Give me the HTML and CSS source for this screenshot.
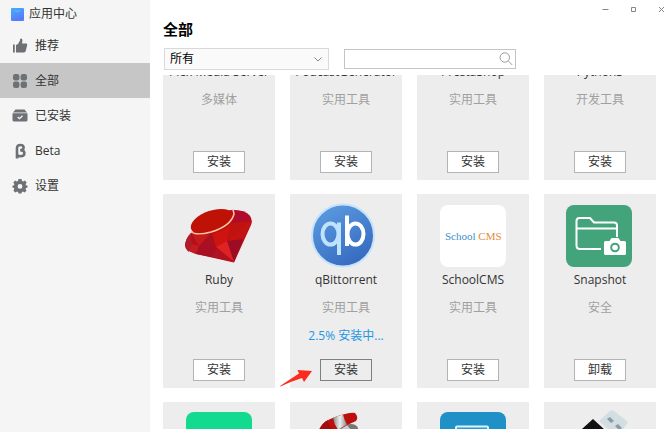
FILE: index.html
```html
<!DOCTYPE html>
<html lang="zh-CN">
<head>
<meta charset="utf-8">
<meta name="viewport" content="width=device-width, initial-scale=1">
<title>应用中心</title>
<link rel="stylesheet" href="styles.css">
</head>
<body>
<div class="app">
  <aside class="sidebar">
    <div class="brand">
      <svg class="brand-icon" viewBox="0 0 13 13" aria-hidden="true">
        <defs><linearGradient id="bag" x1="0" y1="0" x2="0.4" y2="1"><stop offset="0" stop-color="#41b0f8"/><stop offset="1" stop-color="#5a78fa"/></linearGradient></defs>
        <rect width="13" height="13" rx="1" fill="url(#bag)"/>
        <path d="M4 2.500q2.500 2.500 5 0" fill="none" stroke="#7fc6fb" stroke-width=".7"/>
      </svg>
      <span>应用中心</span>
    </div>
    <nav class="nav">
      <a class="nav-item" href="#recommend">
        <svg class="nav-icon" viewBox="0 0 16 16" aria-hidden="true"><path d="M1 6.500h1.800v8H1zM4 7l2-1 2.100-3.800V1.200c0-.5.4-.7.8-.6 1.200.2 1.700 1.200 1.500 2.300L10 5.500h4c.9 0 1.400.6 1.200 1.400l-1.500 6.200c-.2.900-.8 1.400-1.700 1.400H4z"/></svg>
        <span>推荐</span>
      </a>
      <a class="nav-item active" href="#all" aria-current="page">
        <svg class="nav-icon" viewBox="0 0 16 16" aria-hidden="true"><rect x="1" y="1" width="6.400" height="6.400" rx="2.200"/><rect x="8.600" y="1" width="6.400" height="6.400" rx="2.200"/><rect x="1" y="8.600" width="6.400" height="6.400" rx="2.200"/><rect x="8.600" y="8.600" width="6.400" height="6.400" rx="2.200"/></svg>
        <span>全部</span>
      </a>
      <a class="nav-item" href="#installed">
        <svg class="nav-icon" viewBox="0 0 16 16" aria-hidden="true"><path d="M3.500 1.500h9l2.500 3H1z"/><path d="M.5 5.300h15V12q0 1.500-1.500 1.500H2Q.5 13.500.5 12z"/><path d="M5.700 9l1.800 1.700 3-3" fill="none" stroke="#f5f5f5" stroke-width="1.300"/></svg>
        <span>已安装</span>
      </a>
      <a class="nav-item" href="#beta">
        <svg class="nav-icon" viewBox="0 0 16 16" aria-hidden="true"><path d="M5 15.500V5q0-3 3.400-3 3.200 0 3.200 2.700 0 2.300-3.400 2.500 4.200 0 4.200 3.100 0 3-3.700 3-2.200 0-3.700-1.500" fill="none" stroke="#6d7176" stroke-width="2.600"/></svg>
        <span>Beta</span>
      </a>
      <a class="nav-item" href="#settings">
        <svg class="nav-icon" viewBox="0 0 16 16" aria-hidden="true"><path fill-rule="evenodd" d="M6.500 1h3l.5 2 1.200.5L13 2.400 14.600 4.500l-1 1.700.4 1 1.500.6v1.600L14 10l-.5 1 1 1.700-1.900 1.800-1.700-1-1 .4-.5 1.600H6.600L6 13.900l-1-.4-1.700 1-1.900-1.800 1-1.700L2 10 .5 9.400V7.800L2 7.200l.4-1-1-1.700L3 2.400l1.800 1.100L6 3zM8 6a2.400 2.400 0 1 0 0 4.800A2.400 2.400 0 0 0 8 6z"/></svg>
        <span>设置</span>
      </a>
    </nav>
  </aside>

  <main class="main">
    <header class="header">
      <h1 class="title">全部</h1>
      <div class="window-controls">
        <button type="button" aria-label="最小化"><svg viewBox="0 0 7 7"><path d="M.5 3.500h6"/></svg></button>
        <button type="button" aria-label="最大化"><svg viewBox="0 0 7 7"><path d="M1.500 1.500h4v4h-4z"/></svg></button>
        <button type="button" aria-label="关闭"><svg viewBox="0 0 7 7"><path d="M1 1l5 5M6 1L1 6"/></svg></button>
      </div>
    </header>

    <div class="filters">
      <div class="select-box">
        <select aria-label="分类"><option>所有</option></select>
        <svg class="chevron" viewBox="0 0 8 5" aria-hidden="true"><path d="M.5.5L4 4 7.500.5"/></svg>
      </div>
      <div class="search-box">
        <input type="text" aria-label="搜索">
        <svg class="search-icon" viewBox="0 0 14 14" aria-hidden="true"><circle cx="5.800" cy="5.500" r="4.700"/><path d="M9.300 9l4 4"/></svg>
      </div>
    </div>

    <section class="viewport">
      <div class="grid">
        <article class="card">
          <div class="icon"></div>
          <h2 class="name">Plex Media Server</h2><p class="type">多媒体</p>
          <button class="action" type="button">安装</button>
        </article>
        <article class="card">
          <div class="icon"></div>
          <h2 class="name">PodcastGenerator</h2><p class="type">实用工具</p>
          <button class="action" type="button">安装</button>
        </article>
        <article class="card">
          <div class="icon"></div>
          <h2 class="name">PrestaShop</h2><p class="type">实用工具</p>
          <button class="action" type="button">安装</button>
        </article>
        <article class="card">
          <div class="icon"></div>
          <h2 class="name">Python3</h2><p class="type">开发工具</p>
          <button class="action" type="button">安装</button>
        </article>

        <article class="card">
          <svg class="icon" viewBox="0 0 66 66" aria-hidden="true">
            <path d="M44 6q14 0 20 6 3 4 1 9L48 58.500 10 50q-10-3-11-9Q0 34 5 29z" fill="#b40e18"/>
            <path d="M-1 41q1-7 6-12l1 12-3 7q-4-3-4-7z" fill="#b01b29"/>
            <path d="M5 29l21 0-13 13z" fill="#c51a1c"/>
            <path d="M26 28l4 15-17-1z" fill="#ab1020"/>
            <path d="M26 28l19-9-4 18-11 6z" fill="#cf1410"/>
            <path d="M45 19l18-2-22 20z" fill="#c01210"/>
            <path d="M45 19l3-13q12 0 16 6l-1 5z" fill="#b00b2a"/>
            <path d="M41 37l22-20 2 2-8 18z" fill="#c41412"/>
            <path d="M41 37l16-2-9 23z" fill="#9c0c22"/>
            <path d="M30 43l11-6 7 21z" fill="#df2223"/>
            <path d="M30 43l18 15-22-5z" fill="#b01220"/>
            <path d="M13 42l17 1-4 10-16-3z" fill="#a80f22"/>
            <path d="M6 40l7 2-3 8-7-3z" fill="#c31c22"/>
            <ellipse cx="26.500" cy="18" rx="22.500" ry="11.500" transform="rotate(-18 26.500 18)" fill="#bf1206"/>
            <path d="M5 27.500q5 4.500 20 .5 20-6 23-18l-1-5" fill="none" stroke="#f6c6b4" stroke-width="1.500"/>
          </svg>
          <h2 class="name">Ruby</h2><p class="type">实用工具</p>
          <button class="action" type="button">安装</button>
        </article>
        <article class="card">
          <svg class="icon" viewBox="0 0 66 66" aria-hidden="true">
            <defs><linearGradient id="qb" x1="0.2" y1="0" x2="0.8" y2="1"><stop offset="0" stop-color="#5b9be0"/><stop offset="1" stop-color="#3467bd"/></linearGradient></defs>
            <circle cx="30" cy="31.500" r="31" fill="url(#qb)" stroke="#c5e3fb" stroke-width="2"/>
            <g fill="none" stroke-width="4">
              <g stroke="#bfe3ff"><ellipse cx="17.500" cy="30" rx="8" ry="10.500"/><path d="M26 18.500V51"/></g>
              <g stroke="#fff"><ellipse cx="42.500" cy="30" rx="8" ry="10.500"/><path d="M34 11.500V42"/></g>
            </g>
          </svg>
          <h2 class="name">qBittorrent</h2><p class="type">实用工具</p>
          <p class="status">2.5% 安装中...</p>
          <button class="action busy" type="button">安装</button>
          <svg class="pointer" viewBox="0 0 32 18" aria-hidden="true"><path d="M0 17L19 4.500 17.500 1 32 2 24 13l-2-4Q12 12 .5 17.500z"/></svg>
        </article>
        <article class="card">
          <svg class="icon" viewBox="0 0 66 66" aria-hidden="true">
            <rect y="1" width="66" height="62" rx="8" fill="#fff"/>
            <text class="logo-text" x="5" y="36"><tspan fill="#3b8fc9">School</tspan><tspan fill="#e58a3c"> CMS</tspan></text>
          </svg>
          <h2 class="name">SchoolCMS</h2><p class="type">实用工具</p>
          <button class="action" type="button">安装</button>
        </article>
        <article class="card">
          <svg class="icon" viewBox="0 0 66 66" aria-hidden="true">
            <rect x="-1" y="1" width="66" height="62" rx="8" fill="#43a47c"/>
            <path d="M34 45H13q-3.500 0-3.500-3.500V17q0-3 3-3h10.500l4 4.500h20q3 0 3 3V33M9.500 24.500h40" fill="none" stroke="#fff" stroke-width="2"/>
            <path d="M38.500 37h4l2-3h7l2 3h4q1.500 0 1.500 1.500v11q0 1.500-1.500 1.500h-19q-1.500 0-1.500-1.500v-11q0-1.500 1.500-1.500z" fill="#fff"/>
            <circle cx="48" cy="43.500" r="3.800" fill="#fff" stroke="#43a47c" stroke-width="2"/>
          </svg>
          <h2 class="name">Snapshot</h2><p class="type">安全</p>
          <button class="action" type="button">卸载</button>
        </article>

        <article class="card">
          <svg class="icon" viewBox="0 0 66 66" aria-hidden="true"><rect width="66" height="62" rx="8" fill="#12da8e"/></svg>
        </article>
        <article class="card">
          <svg class="icon" viewBox="0 0 66 66" aria-hidden="true">
            <defs><linearGradient id="steel"><stop offset="0" stop-color="#888"/><stop offset=".5" stop-color="#eee"/><stop offset="1" stop-color="#888"/></linearGradient></defs>
            <path d="M24 19l8-6q10-3 13 3v3z" fill="#777"/>
            <path d="M27 18l7-5 4 5z" fill="#ccc"/>
            <path d="M6 18Q10 9 21 5.500 36 0 42 1q4 4 1 8-9 4-19 9z" fill="#bd0f0d"/>
            <path d="M6 18Q9 11 15 8q0 5 5 10z" fill="#a30c0c"/>
            <path d="M20 5.500l10-3q1 5 4 10l-9 5q-4-5-5-12z" fill="url(#steel)"/>
          </svg>
        </article>
        <article class="card">
          <svg class="icon" viewBox="0 0 66 66" aria-hidden="true"><rect width="66" height="62" rx="8" fill="#1f91c7"/><rect x="16" y="14.500" width="32" height="30" rx="1" fill="#2a9bcc" stroke="#d9f5fb" stroke-width="2"/></svg>
        </article>
        <article class="card">
          <svg class="icon" viewBox="0 0 66 66" aria-hidden="true">
            <path d="M32 9L43-1q2-1.500 4 0l14 11L50 26z" fill="#d3dee3"/>
            <path d="M40 7l3-2 4 4-3 2zM48 14l3-2 4 4-3 2z" fill="#879ba8"/>
            <path d="M26 7L5 26l20 20 26-16z" fill="#111"/>
          </svg>
        </article>
      </div>
    </section>
  </main>
</div>
</body>
</html>
```

FILE: styles.css
```css
* { box-sizing: border-box; }

body {
  margin: 0;
  background: #fff;
  color: #333;
  font: 12px/20px "Open Sans", "Noto Sans CJK SC", sans-serif;
}

button, input, select { font: inherit; color: inherit; }
h1, h2, p { margin: 0; font-weight: 400; }

.app { display: flex; height: 100vh; }

.sidebar { flex: 0 0 150px; background: #f5f5f5; }

.brand {
  display: flex;
  align-items: center;
  gap: 5px;
  height: 28px;
  padding-left: 11px;
}
.brand-icon { width: 13px; height: 13px; }

.nav-item {
  display: flex;
  align-items: center;
  gap: 7px;
  height: 35px;
  padding-left: 12px;
  color: #333;
  text-decoration: none;
}
.nav-item.active { background: #c6c6c6; }
.nav-icon { width: 16px; height: 16px; fill: #6d7176; }

.main {
  flex: 1;
  min-width: 0;
  display: flex;
  flex-direction: column;
  padding: 0 0 3px 13px;
}

.header { display: flex; justify-content: space-between; height: 48px; }
.title {
  padding-top: 19px;
  color: #000;
  font-size: 15px;
  font-weight: 700;
}
.window-controls {
  display: flex;
  align-items: flex-start;
  gap: 21px;
  padding: 6px 2px 0 0;
}
.window-controls button {
  display: flex;
  padding: 0;
  border: 0;
  background: none;
}
.window-controls svg { width: 7px; height: 7px; fill: none; stroke: #888; }

.filters { display: flex; align-items: center; gap: 15px; height: 22px; padding-left: 1px; }

.select-box, .search-box { position: relative; display: flex; }
.select-box { flex: 0 1 165px; }
.search-box { flex: 0 1 172px; }
.select-box select {
  width: 100%;
  height: 22px;
  padding: 0 5px;
  border: 1px solid #d9d9d9;
  border-radius: 0;
  background: #fafafa;
  color: #000;
  appearance: none;
}
.chevron {
  position: absolute;
  right: 7px;
  top: 9px;
  width: 8px;
  height: 5px;
  fill: none;
  stroke: #888;
  pointer-events: none;
}
.search-box input {
  width: 100%;
  height: 20px;
  padding: 0 20px 0 5px;
  border: 1px solid #c4c4c4;
  background: #fff;
}
.search-icon {
  position: absolute;
  right: 3px;
  top: 3px;
  width: 14px;
  height: 14px;
  fill: none;
  stroke: #999;
}

.viewport {
  flex: 1;
  min-height: 0;
  margin-top: 5px;
  padding-right: 11px;
  overflow: hidden;
}

/* The list is scrolled part of the way into its first row. */
.grid {
  display: grid;
  grid-template-columns: repeat(4, minmax(0, 1fr));
  grid-auto-rows: minmax(194px, auto);
  gap: 14px 15px;
  margin-top: -89px;
}

.card {
  position: relative;
  display: flex;
  flex-direction: column;
  align-items: center;
  padding: 10px 0 7px;
  background: #ededed;
}
.icon { flex: none; width: 66px; height: 66px; overflow: visible; }
.name { font-size: 12px; white-space: nowrap; }
.type, .status { margin-top: 8px; }
.type { color: #a0a0a0; }
.status { color: #2196e3; }

.action {
  width: 52px;
  height: 22px;
  margin-top: auto;
  padding: 0;
  border: 1px solid #b4b4b4;
  background: #fff;
}
.action.busy { border-color: #808080; background: #ededed; }

.logo-text { font: 11px "Liberation Serif", serif; stroke-width: 0; }

.pointer {
  position: absolute;
  left: -10px;
  top: 175px;
  width: 32px;
  height: 18px;
  fill: #fb2c1c;
}
```
